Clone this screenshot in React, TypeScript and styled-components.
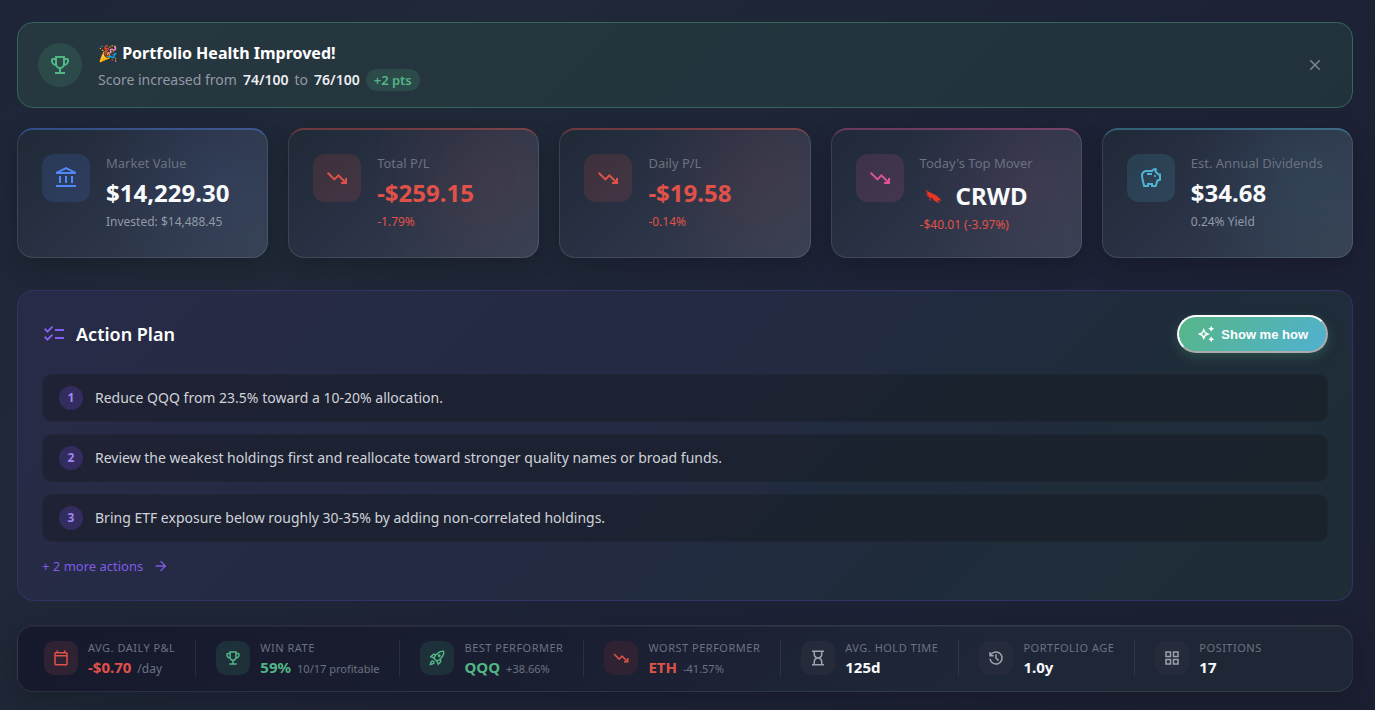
import React from 'react';
import styled, { createGlobalStyle } from 'styled-components';
import {
  MdArrowForward,
  MdChecklist,
  MdClose,
  MdOutlineAutoAwesome,
  MdOutlineGridView,
  MdOutlineRocketLaunch,
  MdOutlineSavings,
} from 'react-icons/md';

const GlobalStyle = createGlobalStyle`
  *, *::before, *::after { box-sizing: border-box; }
  body {
    margin: 0;
    background: #1c2032;
    color: #fff;
    font-family: "Noto Sans", sans-serif;
  }
`;

const Page = styled.main`
  min-height: 100vh;
  padding: 22px 22px 18px 17px;
  display: flex;
  flex-direction: column;
  background: linear-gradient(135deg, #1e2538 0%, #1f2937 25%, #1d2236 60%, #1b1f31 100%);
`;

const green = '#52b585';
const red = '#e05249';
const muted = '#6b7280';
const soft = '#9199a8';

/* ---- icons ---- */

type IconProps = { size?: number };
type Icon = React.ComponentType<IconProps>;

const glyph = (d: string): Icon => ({ size = 24 }) => (
  <svg width={size} height={size} viewBox="0 -960 960 960" fill="currentColor" aria-hidden="true">
    <path d={d} />
  </svg>
);

const TrophyIcon = glyph('M280-120v-80h160v-124q-49-11-87.5-41.500T296-442q-75-9-125.500-65.500T120-640v-40q0-33 23.500-56.500T200-760h80v-80h400v80h80q33 0 56.500 23.500T840-680v40q0 76-50.500 132.500T664-442q-18 46-56.500 76.500T520-324v124h160v80H280Zm0-408v-152h-80v40q0 38 22 68.500t58 43.500Zm200 128q50 0 85-35t35-85v-240H360v240q0 50 35 85t85 35Zm200-128q36-13 58-43.500t22-68.500v-40h-80v152Z');
const TrendingDownIcon = glyph('M640-240v-80h104L536-526 376-366 80-664l56-56 240 240 160-160 264 264v-104h80v240H640Z');
const BankIcon = glyph('M200-280v-280h80v280h-80Zm240 0v-280h80v280h-80Zm240 0v-280h80v280h-80ZM80-120v-80h800v80H80Zm0-520v-80l400-200 400 200v80H80Zm178-80h444L480-830 258-720Z');
const CalendarIcon = glyph('M200-80q-33 0-56.500-23.500T120-160v-560q0-33 23.500-56.500T200-800h40v-80h80v80h320v-80h80v80h40q33 0 56.500 23.500T840-720v560q0 33-23.500 56.500T760-80H200Zm0-80h560v-400H200v400Zm0-480h560v-80H200v80Z');
const HourglassIcon = glyph('M320-160h320v-120q0-66-47-113t-113-47q-66 0-113 47t-47 113v120Zm160-360q66 0 113-47t47-113v-120H320v120q0 66 47 113t113 47ZM160-80v-80h80v-120q0-61 28.500-114.500T348-480q-51-32-79.500-85.500T240-680v-120h-80v-80h640v80h-80v120q0 61-28.500 114.500T612-480q51 32 79.500 85.500T720-280v120h80v80H160Z');
const HistoryIcon = glyph('M480-120q-138 0-240.500-91.500T122-440h82q14 104 92.500 172T480-200q117 0 198.500-81.500T760-480q0-117-81.500-198.500T480-760q-69 0-129 32t-101 88h110v80H120v-240h80v94q51-64 124.500-99T480-840q75 0 140.500 28.500t114 77q48.500 48.500 77 114T840-480q0 75-28.500 140.500t-77 114q-48.500 48.500-114 77T480-120Zm112-192L440-464v-216h80v184l128 128-56 56Z');

const FalconLogo = () => (
  <svg width="28" height="28" viewBox="0 0 28 28" fill="#ee3524" aria-hidden="true">
    <path d="M5.500 7.500c2.500 2.500 6.500 3.500 10 5.500 2.500 1.500 2.500 2.800 4.600 3.800l1.200 2.200c-1.400-.9-2.500-1-3.600-.7l1.800 3c-2.300-1.200-4.500-1.700-6-3.300l-1-1.700-1.800-.8 1 1.500c-2.200-1.200-3.700-2.400-4.400-4l2 .9c-1.400-1.200-2.400-2.100-3-3.600l2 1.200C7 10.200 6 9 5.500 7.500z" />
    <path d="M6 12.500l1.600 1.200M9 17l2 1.500" stroke="#ee3524" strokeWidth="1" />
  </svg>
);

/* ---- banner ---- */

const Banner = styled.section`
  display: flex;
  align-items: center;
  gap: 16px;
  padding: 16px 20px;
  border: 1px solid #35665b;
  border-radius: 16px;
  background: linear-gradient(135deg, #26373f 0%, #22323d 100%);
`;

const BannerIcon = styled.span`
  display: flex;
  align-items: center;
  justify-content: center;
  width: 44px;
  height: 44px;
  border-radius: 50%;
  background: #2b4a49;
  color: ${green};
`;

const BannerBody = styled.div`
  flex: 1;
  display: flex;
  flex-direction: column;
  gap: 2px;
`;

const BannerTitle = styled.h2`
  margin: 0;
  font-size: 16px;
  line-height: 28px;
  font-weight: 700;
`;

const BannerText = styled.p`
  margin: 0;
  display: flex;
  align-items: center;
  flex-wrap: wrap;
  gap: 6px;
  font-size: 14px;
  line-height: 22px;
  color: ${soft};

  strong { color: #eceef2; font-weight: 600; }
`;

const Pill = styled.span`
  padding: 0 8px;
  border-radius: 11px;
  background: #2b4a49;
  color: ${green};
  font-size: 13px;
  font-weight: 600;
`;

const CloseButton = styled.button`
  display: flex;
  padding: 8px;
  border: 0;
  background: none;
  color: #7d8694;
  cursor: pointer;
`;

/* ---- metric cards ---- */

const Cards = styled.section`
  display: grid;
  grid-template-columns: repeat(5, minmax(0, 1fr));
  gap: 20px;
  margin-top: 20px;
`;

const Card = styled.article<{ $rgb: string }>`
  display: flex;
  align-items: flex-start;
  gap: 16px;
  padding: 24px 24px 23px;
  border: 1px solid rgba(255, 255, 255, 0.11);
  border-top: 2px solid rgba(${p => p.$rgb}, 0.4);
  border-radius: 16px;
  background:
    radial-gradient(circle at 80% 40%, rgba(${p => p.$rgb}, 0.08), rgba(${p => p.$rgb}, 0) 55%),
    linear-gradient(135deg, #1f2937 0%, #2a3245 45%, #374153 100%);
  background-origin: border-box;
  box-shadow: 0 8px 24px rgba(0, 0, 0, 0.2);
`;

const CardIcon = styled.span<{ $rgb: string }>`
  flex: none;
  display: flex;
  align-items: center;
  justify-content: center;
  width: 48px;
  height: 48px;
  border-radius: 12px;
  background: rgba(${p => p.$rgb}, 0.15);
  color: rgb(${p => p.$rgb});
`;

const CardBody = styled.div`
  display: flex;
  flex-direction: column;
  white-space: nowrap;
`;

const CardLabel = styled.span`
  font-size: 13px;
  line-height: 18px;
  color: ${muted};
`;

const CardValue = styled.strong<{ $tone?: string; $withLogo?: boolean }>`
  display: flex;
  align-items: center;
  gap: 8px;
  margin: 4px 0 3px;
  padding-top: ${p => (p.$withLogo ? 3 : 0)}px;
  font-size: 24px;
  line-height: 34px;
  font-weight: 700;
  color: ${p => p.$tone ?? '#f8fafc'};
`;

const CardNote = styled.span<{ $tone?: string }>`
  font-size: 12px;
  line-height: 18px;
  color: ${p => p.$tone ?? soft};
`;

/* ---- action plan ---- */

const Plan = styled.section`
  margin-top: 32px;
  padding: 24px;
  border: 1px solid #343163;
  border-radius: 16px;
  background: linear-gradient(135deg, #282b47 0%, #232a43 45%, #1f2c3a 75%, #1f2d38 100%);
`;

const PlanHeader = styled.header`
  display: flex;
  align-items: center;
  justify-content: space-between;
  margin-bottom: 21px;
`;

const PlanTitle = styled.h2`
  display: flex;
  align-items: center;
  gap: 10px;
  margin: 0;
  font-size: 18px;
  line-height: 24px;
  font-weight: 600;

  svg { color: #845ef0; }
`;

const ShowButton = styled.button`
  display: flex;
  align-items: center;
  gap: 6px;
  height: 38px;
  padding: 0 18px;
  border: 2px outset #fff;
  border-radius: 19px;
  background: linear-gradient(135deg, #56b684 0%, #51b1d3 100%) border-box;
  box-shadow: 0 4px 12px rgba(82, 181, 133, 0.25);
  color: #fff;
  font: bold 13px "Liberation Sans", Arial, sans-serif;
  cursor: pointer;
`;

const Steps = styled.ol`
  display: flex;
  flex-direction: column;
  gap: 12px;
  margin: 0;
  padding: 0;
  list-style: none;
`;

const Step = styled.li`
  display: flex;
  align-items: center;
  gap: 12px;
  min-height: 48px;
  padding: 0 16px;
  border: 1px solid rgba(255, 255, 255, 0.02);
  border-radius: 10px;
  background: rgba(18, 20, 24, 0.38);
  color: #d0d3da;
  font-size: 14px;
  line-height: 24px;
`;

const StepNumber = styled.span`
  flex: none;
  width: 24px;
  height: 24px;
  border-radius: 50%;
  background: #332c5e;
  color: #9f86f5;
  font-size: 12px;
  line-height: 24px;
  font-weight: 700;
  text-align: center;
`;

const MoreLink = styled.a`
  display: inline-flex;
  align-items: center;
  gap: 10px;
  margin-top: 14px;
  font-size: 13px;
  line-height: 20px;
  color: #805be8;
  text-decoration: none;
  vertical-align: top;
`;

/* ---- stats strip ---- */

const Stats = styled.section`
  display: flex;
  margin-top: 24px;
  padding: 14px 26px 15px;
  border: 1px solid rgba(255, 255, 255, 0.09);
  border-radius: 16px;
  background: linear-gradient(135deg, #16192b 0%, #1a1e31 40%, #1e2737 70%, #1f2736 100%);
  box-shadow:
    inset 0 1px 0 rgba(255, 255, 255, 0.05),
    0 8px 24px rgba(0, 0, 0, 0.2);
`;

const Stat = styled.div`
  display: flex;
  align-items: center;
  gap: 10px;
  white-space: nowrap;

  & + & {
    margin-left: 20px;
    padding-left: 20px;
    border-left: 1px solid rgba(255, 255, 255, 0.08);
  }
`;

const StatIcon = styled.span<{ $bg: string; $color: string }>`
  display: flex;
  align-items: center;
  justify-content: center;
  width: 34px;
  height: 34px;
  border-radius: 10px;
  background: ${p => p.$bg};
  color: ${p => p.$color};
`;

const StatBody = styled.div`
  display: flex;
  flex-direction: column;
`;

const StatLabel = styled.span`
  font-size: 11px;
  line-height: 16px;
  letter-spacing: 0.5px;
  text-transform: uppercase;
  color: ${muted};
`;

const StatLine = styled.span<{ $small: boolean }>`
  display: flex;
  align-items: baseline;
  gap: 6px;
  height: 20px;
  font-size: ${p => (p.$small ? 11 : 12)}px;
  line-height: 20px;
  color: ${muted};
`;

const StatValue = styled.strong<{ $color: string }>`
  font-size: 15px;
  line-height: 22px;
  font-weight: 700;
  color: ${p => p.$color};
`;

const BLUE = '80, 136, 245';
const RED = '224, 82, 73';
const PINK = '219, 84, 150';
const CYAN = '82, 178, 212';

type Metric = {
  label: string;
  value: string;
  note: string;
  rgb: string;
  icon: Icon;
  valueTone?: string;
  noteTone?: string;
  logo?: boolean;
};

const metrics: Metric[] = [
  { label: 'Market Value', value: '$14,229.30', note: 'Invested: $14,488.45', rgb: BLUE, icon: BankIcon },
  { label: 'Total P/L', value: '-$259.15', note: '-1.79%', rgb: RED, icon: TrendingDownIcon, valueTone: red, noteTone: red },
  { label: 'Daily P/L', value: '-$19.58', note: '-0.14%', rgb: RED, icon: TrendingDownIcon, valueTone: red, noteTone: red },
  { label: "Today's Top Mover", value: 'CRWD', note: '-$40.01 (-3.97%)', rgb: PINK, icon: TrendingDownIcon, noteTone: red, logo: true },
  { label: 'Est. Annual Dividends', value: '$34.68', note: '0.24% Yield', rgb: CYAN, icon: MdOutlineSavings },
];

const steps = [
  'Reduce QQQ from 23.5% toward a 10-20% allocation.',
  'Review the weakest holdings first and reallocate toward stronger quality names or broad funds.',
  'Bring ETF exposure below roughly 30-35% by adding non-correlated holdings.',
];

const tones = {
  down: { bg: '#2f2333', icon: red, value: red },
  up: { bg: '#1e3039', icon: green, value: green },
  flat: { bg: '#262b3b', icon: '#9ca3af', value: '#f8fafc' },
};

type StatItem = { label: string; value: string; extra?: string; tone: keyof typeof tones; icon: Icon };

const stats: StatItem[] = [
  { label: 'Avg. Daily P&L', value: '-$0.70', extra: '/day', tone: 'down', icon: CalendarIcon },
  { label: 'Win Rate', value: '59%', extra: '10/17 profitable', tone: 'up', icon: TrophyIcon },
  { label: 'Best Performer', value: 'QQQ', extra: '+38.66%', tone: 'up', icon: MdOutlineRocketLaunch },
  { label: 'Worst Performer', value: 'ETH', extra: '-41.57%', tone: 'down', icon: TrendingDownIcon },
  { label: 'Avg. Hold Time', value: '125d', tone: 'flat', icon: HourglassIcon },
  { label: 'Portfolio Age', value: '1.0y', tone: 'flat', icon: HistoryIcon },
  { label: 'Positions', value: '17', tone: 'flat', icon: MdOutlineGridView },
];

export default function App() {
  return (
    <>
      <GlobalStyle />
      <Page>
        <Banner>
          <BannerIcon><TrophyIcon size={24} /></BannerIcon>
          <BannerBody>
            <BannerTitle>🎉 Portfolio Health Improved!</BannerTitle>
            <BannerText>
              <span>Score increased from</span>
              <strong>74/100</strong>
              <span>to</span>
              <strong>76/100</strong>
              <Pill>+2 pts</Pill>
            </BannerText>
          </BannerBody>
          <CloseButton aria-label="Dismiss"><MdClose size={18} /></CloseButton>
        </Banner>

        <Cards>
          {metrics.map(m => (
            <Card key={m.label} $rgb={m.rgb}>
              <CardIcon $rgb={m.rgb}><m.icon size={24} /></CardIcon>
              <CardBody>
                <CardLabel>{m.label}</CardLabel>
                <CardValue $tone={m.valueTone} $withLogo={m.logo}>
                  {m.logo && <FalconLogo />}
                  {m.value}
                </CardValue>
                <CardNote $tone={m.noteTone}>{m.note}</CardNote>
              </CardBody>
            </Card>
          ))}
        </Cards>

        <Plan>
          <PlanHeader>
            <PlanTitle><MdChecklist size={24} />Action Plan</PlanTitle>
            <ShowButton><MdOutlineAutoAwesome size={18} />Show me how</ShowButton>
          </PlanHeader>
          <Steps>
            {steps.map((text, i) => (
              <Step key={text}><StepNumber>{i + 1}</StepNumber>{text}</Step>
            ))}
          </Steps>
          <MoreLink href="#actions">+ 2 more actions <MdArrowForward size={16} /></MoreLink>
        </Plan>

        <Stats>
          {stats.map(s => (
            <Stat key={s.label}>
              <StatIcon $bg={tones[s.tone].bg} $color={tones[s.tone].icon}><s.icon size={18} /></StatIcon>
              <StatBody>
                <StatLabel>{s.label}</StatLabel>
                <StatLine $small={s.extra !== '/day'}>
                  <StatValue $color={tones[s.tone].value}>{s.value}</StatValue>
                  {s.extra}
                </StatLine>
              </StatBody>
            </Stat>
          ))}
        </Stats>
      </Page>
    </>
  );
}
